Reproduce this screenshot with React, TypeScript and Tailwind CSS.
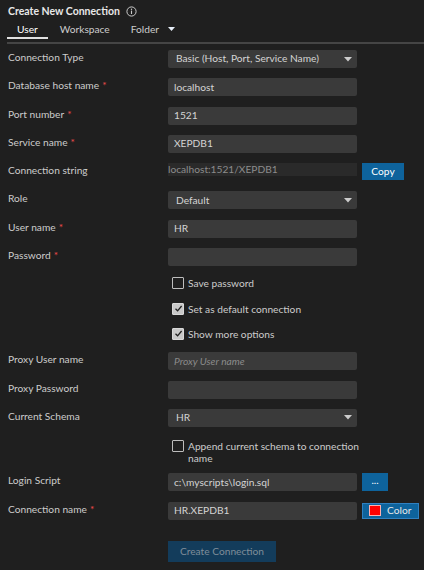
import React, {useState} from "react";

const font = {fontFamily: '"Segoe UI", Lato, "Noto Sans", sans-serif'};

const Req = () => <span className="text-[#f14c4c] ml-[3px]">*</span>;

const Caret = () => (
    <svg width="8" height="5" viewBox="0 0 8 5" className="shrink-0">
        <path d="M0 0 L8 0 L4 4.5 Z" fill="#cccccc"/>
    </svg>
);

const Label = ({text, required}: {text: string; required?: boolean}) => (
    <div className="text-[10.2px] leading-[14px] text-[#cccccc] whitespace-nowrap">
        {text}{required && <Req/>}
    </div>
);

const TextBox = ({value, placeholder}: {value?: string; placeholder?: string}) => (
    <div className="h-[18px] w-[189px] rounded-[2px] bg-[#3a3a3a] flex items-center px-[6px] text-[10.2px]">
        {value ? (
            <span className="text-[#d4d4d4]">{value}</span>
        ) : (
            <span className="italic text-[#8b8b8b]">{placeholder}</span>
        )}
    </div>
);

const Select = ({value}: {value: string}) => (
    <div className="h-[18px] w-[189px] rounded-[2px] bg-[#3a3a3a] flex items-center justify-between pl-[8px] pr-[5px] text-[10.2px] text-[#d4d4d4]">
        <span>{value}</span>
        <Caret/>
    </div>
);

const Check = ({checked, label}: {checked: boolean; label: React.ReactNode}) => (
    <div className="flex items-start gap-[4px]">
        <div
            className={
                checked
                    ? "mt-[1px] w-[12px] h-[12px] shrink-0 rounded-[1px] bg-[#c8c8c8] border border-[#d8d8d8] flex items-center justify-center"
                    : "mt-[1px] w-[12px] h-[12px] shrink-0 rounded-[1px] bg-[#1f1f1f] border border-[#bdbdbd]"
            }
        >
            {checked && (
                <svg width="9" height="9" viewBox="0 0 9 9">
                    <path d="M1.5 4.8 L3.6 6.8 L7.6 2" stroke="#1f1f1f" strokeWidth="1.3" fill="none"/>
                </svg>
            )}
        </div>
        <div className="text-[10.2px] leading-[12px] pt-[1px] text-[#cccccc] w-[175px]">{label}</div>
    </div>
);

const Row = ({children, label, required, h = "h-[18px]"}: {
    children: React.ReactNode;
    label?: string;
    required?: boolean;
    h?: string;
}) => (
    <div className={`grid grid-cols-[160px_auto] items-start ${h}`}>
        <div>{label && <Label text={label} required={required}/>}</div>
        <div className="flex items-start">{children}</div>
    </div>
);

const BlueButton = ({children, className}: {children: React.ReactNode; className: string}) => (
    <button className={`ml-[5px] bg-[#0e639c] text-white text-[10.2px] flex items-center justify-center ${className}`}>
        {children}
    </button>
);

export default function App() {
    const [tab] = useState("User");

    return (
        <div className="w-[424px] h-[570px] bg-[#1f1f1f] text-[#cccccc] overflow-hidden" style={font}>
            <div className="pt-[3px] pl-[8px] flex items-center gap-[6px]">
                <h1 className="text-[10.5px] leading-[16px] font-bold text-[#e8e8e8]">Create New Connection</h1>
                <svg width="11" height="11" viewBox="0 0 11 11">
                    <circle cx="5.5" cy="5.5" r="4.6" stroke="#cccccc" strokeWidth="1" fill="none"/>
                    <path d="M5.5 4.6 V8" stroke="#cccccc" strokeWidth="1.1"/>
                    <circle cx="5.5" cy="3.2" r="0.7" fill="#cccccc"/>
                </svg>
            </div>

            <div className="mt-[3px] ml-[7px] flex items-start border-b-2 border-[#454545] pb-[3px]">
                {["User", "Workspace", "Folder"].map((t) => (
                    <div
                        key={t}
                        className={
                            t === tab
                                ? "px-[10px] text-[10.2px] leading-[14px] pb-[1px] text-white border-b-2 border-[#e0e0e0]"
                                : "pl-[12px] pr-[9px] text-[10.2px] leading-[14px] pb-[3px] text-[#cccccc]"
                        }
                    >
                        {t}
                    </div>
                ))}
                <div className="pt-[5px]">
                    <svg width="7" height="5" viewBox="0 0 7 5">
                        <path d="M0 0 L7 0 L3.5 4 Z" fill="#e6eef8"/>
                    </svg>
                </div>
            </div>

            <div className="mt-[6px] pl-[8px] flex flex-col gap-[10.3px]">
                <Row label="Connection Type"><Select value="Basic (Host, Port, Service Name)"/></Row>
                <Row label="Database host name" required><TextBox value="localhost"/></Row>
                <Row label="Port number" required><TextBox value="1521"/></Row>
                <Row label="Service name" required><TextBox value="XEPDB1"/></Row>
                <Row label="Connection string">
                    <div className="h-[13px] w-[189px] bg-[#2a2a2a] flex items-center text-[10.2px] text-[#8c8c8c]">
                        localhost:1521/XEPDB1
                    </div>
                    <BlueButton className="w-[42px] h-[17px]">Copy</BlueButton>
                </Row>
                <Row label="Role"><Select value="Default"/></Row>
                <Row label="User name" required><TextBox value="HR"/></Row>
                <Row label="Password" required><TextBox/></Row>
                <Row h="h-[15px]"><div className="pl-[4px]"><Check checked={false} label="Save password"/></div></Row>
                <Row h="h-[15px]"><div className="pl-[4px]"><Check checked label="Set as default connection"/></div></Row>
                <Row h="h-[15px]"><div className="pl-[4px]"><Check checked label="Show more options"/></div></Row>
                <Row label="Proxy User name"><TextBox placeholder="Proxy User name"/></Row>
                <Row label="Proxy Password"><TextBox/></Row>
                <Row label="Current Schema"><Select value="HR"/></Row>
                <Row h="h-[26px]">
                    <div className="pl-[4px] pt-[2px]">
                        <Check checked={false} label="Append current schema to connection name"/>
                    </div>
                </Row>
                <Row label="Login Script">
                    <TextBox value="c:\myscripts\login.sql"/>
                    <BlueButton className="w-[26px] h-[18px] leading-[10px] pb-[4px]">...</BlueButton>
                </Row>
                <Row label="Connection name" required>
                    <TextBox value="HR.XEPDB1"/>
                    <BlueButton className="w-[57px] h-[16px] mt-[1px] border border-[#2f80c0] gap-[6px] pl-[6px] justify-start">
                        <span className="w-[12px] h-[11px] bg-[#ff0000] border border-[#ffb0b0]"/>
                        <span className="text-[#e8e8e8]">Color</span>
                    </BlueButton>
                </Row>
                <div className="grid grid-cols-[160px_auto] mt-[11px]">
                    <div/>
                    <button className="w-[108px] h-[21px] bg-[#133c5b] text-[#7f8d99] text-[10.2px] flex items-center justify-center">
                        Create Connection
                    </button>
                </div>
            </div>
        </div>
    );
}
